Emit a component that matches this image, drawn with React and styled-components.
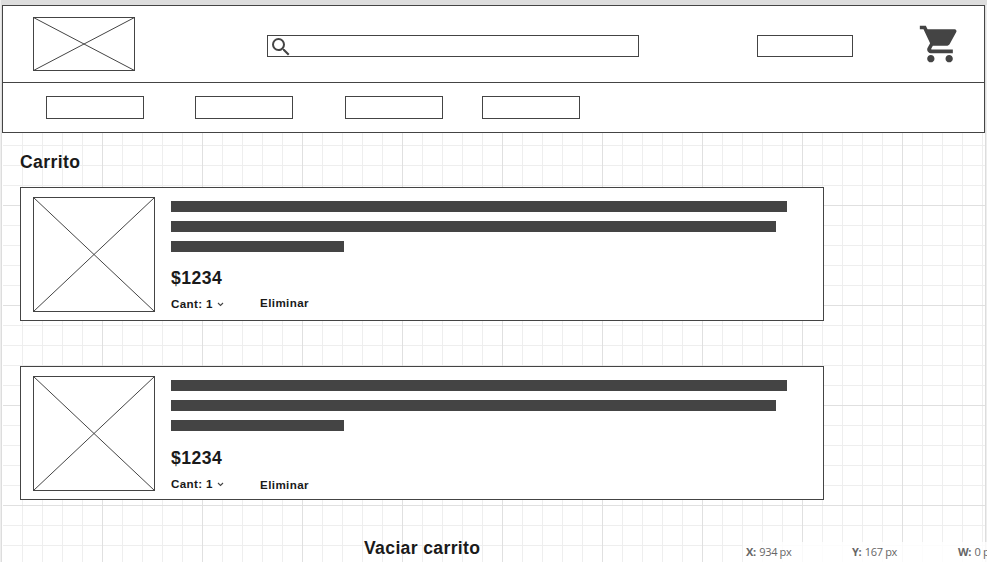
import React from "react";
import styled, { createGlobalStyle } from "styled-components";

const INK = "#444444";

const GlobalStyle = createGlobalStyle`
  * { box-sizing: border-box; }
  html, body { margin: 0; padding: 0; overflow: hidden; }
  body { font-family: "Liberation Sans", Arial, sans-serif; color: #1a1a1a; }
`;

const Workspace = styled.div`
  position: relative;
  width: 987px;
  height: 562px;
  overflow: hidden;
  display: flex;
  flex-direction: column;
  background: linear-gradient(to right, #eeeeee 1px, #dddddd 1px 2px, #ffffff 2px 985px, #dddddd 985px 986px, #eeeeee 986px);
`;

const Ruler = styled.div`
  flex: none;
  height: 5px;
  margin-left: 1px;
  background: #dddddd;
`;

const Canvas = styled.main`
  flex: 1;
  min-height: 0;
  margin-left: 2px;
  width: 983px;
  background-color: #ffffff;
  background-image:
    linear-gradient(#ffffff, #ffffff),
    linear-gradient(to right, #e0e0e0 1px, transparent 1px),
    linear-gradient(to bottom, #e0e0e0 1px, transparent 1px),
    linear-gradient(to right, #eeeeee 1px, transparent 1px),
    linear-gradient(to bottom, #eeeeee 1px, transparent 1px);
  background-size: 1px 100%, 100px 100px, 100px 100px, 20px 20px, 20px 20px;
  background-repeat: no-repeat, repeat, repeat, repeat, repeat;
`;

const Header = styled.header`
  height: 128px;
  border: 1px solid ${INK};
  background: #ffffff;
`;

const TopBar = styled.div`
  display: flex;
  align-items: flex-start;
  height: 77px;
  padding: 11px 0 0 30px;
  border-bottom: 1px solid ${INK};
`;

const NavBar = styled.nav`
  display: flex;
  padding: 13px 0 0 43px;
`;

const Outline = styled.div`
  flex: none;
  display: flex;
  width: ${(p) => p.$width}px;
  height: ${(p) => p.$height}px;
  margin-left: ${(p) => p.$gap || 0}px;
  margin-top: ${(p) => p.$drop || 0}px;
  border: 1px solid ${INK};
  background: #ffffff;
`;

const SearchIcon = styled.svg`
  display: block;
  width: 24px;
  height: 24px;
  margin: -1px 0 0 1px;
  fill: ${INK};
`;

const CartIcon = styled.svg`
  flex: none;
  width: 44px;
  height: 44px;
  margin: 5px 0 0 65px;
  fill: ${INK};
`;

const Cross = styled.svg`
  display: block;
  flex: none;
  width: ${(p) => p.$width}px;
  height: ${(p) => p.$height}px;
  fill: #ffffff;
  stroke: ${INK};
  stroke-width: 1;
`;

const Content = styled.section`
  display: flex;
  flex-direction: column;
  padding: 19px 0 0 18px;
`;

const Title = styled.h1`
  margin: 0 0 15px;
  height: 20px;
  font-size: 17.6px;
  line-height: 20px;
  font-weight: 700;
  letter-spacing: 0.4px;
`;

const Card = styled.article`
  display: flex;
  width: 804px;
  height: 134px;
  margin-bottom: 45px;
  padding: 9px 0 0 12px;
  border: 1px solid ${INK};
  background: #ffffff;
`;

const Details = styled.div`
  padding: 4px 0 0 16px;
`;

const TextBars = styled.div`
  display: flex;
  flex-direction: column;
  gap: 9px;
`;

const TextBar = styled.div`
  width: ${(p) => p.$width}px;
  height: 11px;
  background: ${INK};
`;

const Price = styled.div`
  margin-top: ${(p) => p.$top}px;
  height: 20px;
  font-size: 17.6px;
  line-height: 20px;
  font-weight: 700;
  letter-spacing: 0.45px;
`;

const Actions = styled.div`
  display: flex;
  align-items: flex-start;
  margin-top: 9px;
  font-size: 11.6px;
  line-height: 14px;
  font-weight: 700;
`;

const Quantity = styled.div`
  display: flex;
  width: 89px;
  letter-spacing: 0.35px;
`;

const Chevron = styled.svg`
  width: 7px;
  height: 5px;
  margin: 5px 0 0 4px;
  fill: none;
  stroke: ${INK};
  stroke-width: 1.1;
`;

const Remove = styled.span`
  margin-top: ${(p) => p.$top}px;
  letter-spacing: 0.4px;
`;

const ClearCart = styled.div`
  margin: -7px 0 0 344px;
  height: 20px;
  font-size: 17.6px;
  line-height: 20px;
  font-weight: 700;
  letter-spacing: 0.35px;
  white-space: nowrap;
`;

const StatusBar = styled.footer`
  position: absolute;
  left: 743px;
  top: 542px;
  display: flex;
  height: 20px;
  width: 244px;
  padding-left: 3px;
  overflow: hidden;
  background: rgba(255, 255, 255, 0.8);
  color: #666666;
  font-family: "Open Sans", sans-serif;
  font-size: 11px;
  line-height: 20px;
  letter-spacing: -0.35px;
`;

const Reading = styled.span`
  flex: none;
  width: 106px;
  white-space: nowrap;

  b {
    margin-right: 1px;
  }
`;

function Placeholder({ width, height }) {
  return (
    <Cross $width={width} $height={height} viewBox={`0 0 ${width} ${height}`}>
      <rect x="0.5" y="0.5" width={width - 1} height={height - 1} />
      <path d={`M.5 .5L${width - 0.5} ${height - 0.5}M${width - 0.5} .5L.5 ${height - 0.5}`} />
    </Cross>
  );
}

function CartItem({ priceTop, removeTop }) {
  return (
    <Card>
      <Placeholder width={122} height={115} />
      <Details>
        <TextBars>
          <TextBar $width={616} />
          <TextBar $width={605} />
          <TextBar $width={173} />
        </TextBars>
        <Price $top={priceTop}>$1234</Price>
        <Actions>
          <Quantity>
            Cant: 1
            <Chevron viewBox="0 0 7 5">
              <path d="M1 1L3.5 3.5L6 1" />
            </Chevron>
          </Quantity>
          <Remove $top={removeTop}>Eliminar</Remove>
        </Actions>
      </Details>
    </Card>
  );
}

const navItems = [0, 51, 52, 39];

const readings = [
  ["X:", "934 px"],
  ["Y:", "167 px"],
  ["W:", "0 px"],
];

export default function App() {
  return (
    <Workspace>
      <GlobalStyle />
      <Ruler />
      <Canvas>
        <Header>
          <TopBar>
            <Placeholder width={102} height={54} />
            <Outline $width={372} $height={22} $gap={132} $drop={18}>
              <SearchIcon viewBox="0 0 24 24">
                <path d="M15.5 14h-.79l-.28-.27A6.471 6.471 0 0 0 16 9.5 6.5 6.5 0 1 0 9.5 16c1.61 0 3.09-.59 4.23-1.57l.27.28v.79l5 4.99L20.49 19l-4.99-5zm-6 0C7.01 14 5 11.99 5 9.5S7.01 5 9.5 5 14 7.01 14 9.5 11.99 14 9.5 14z" />
              </SearchIcon>
            </Outline>
            <Outline $width={96} $height={22} $gap={118} $drop={18} />
            <CartIcon viewBox="0 0 24 24">
              <path d="M7 18c-1.1 0-1.99.9-1.99 2S5.9 22 7 22s2-.9 2-2-.9-2-2-2zM1 2v2h2l3.6 7.59-1.35 2.45c-.16.28-.25.61-.25.96 0 1.1.9 2 2 2h12v-2H7.42c-.14 0-.25-.11-.25-.25l.03-.12.9-1.63h7.45c.75 0 1.41-.41 1.75-1.03l3.58-6.49A1 1 0 0 0 20 4H5.21l-.94-2H1zm16 16c-1.1 0-1.99.9-1.99 2s.89 2 1.99 2 2-.9 2-2-.9-2-2-2z" />
            </CartIcon>
          </TopBar>
          <NavBar>
            {navItems.map((gap, i) => (
              <Outline key={i} $width={98} $height={23} $gap={gap} />
            ))}
          </NavBar>
        </Header>
        <Content>
          <Title>Carrito</Title>
          <CartItem priceTop={16} removeTop={-1} />
          <CartItem priceTop={17} removeTop={1} />
          <ClearCart>Vaciar carrito</ClearCart>
        </Content>
      </Canvas>
      <StatusBar>
        {readings.map(([label, value]) => (
          <Reading key={label}>
            <b>{label}</b> {value}
          </Reading>
        ))}
      </StatusBar>
    </Workspace>
  );
}
